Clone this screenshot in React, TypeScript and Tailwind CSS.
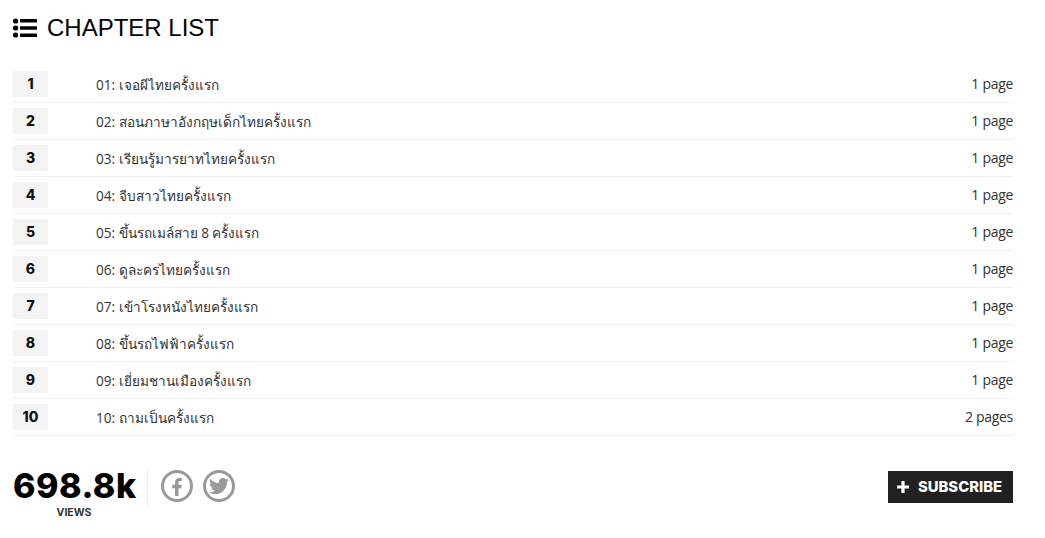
import { FaFacebookF, FaTwitter } from "react-icons/fa";

const chapters = [
  { no: 1, title: "01: เจอผีไทยครั้งแรก", pages: "1 page" },
  { no: 2, title: "02: สอนภาษาอังกฤษเด็กไทยครั้งแรก", pages: "1 page" },
  { no: 3, title: "03: เรียนรู้มารยาทไทยครั้งแรก", pages: "1 page" },
  { no: 4, title: "04: จีบสาวไทยครั้งแรก", pages: "1 page" },
  { no: 5, title: "05: ขึ้นรถเมล์สาย 8 ครั้งแรก", pages: "1 page" },
  { no: 6, title: "06: ดูละครไทยครั้งแรก", pages: "1 page" },
  { no: 7, title: "07: เข้าโรงหนังไทยครั้งแรก", pages: "1 page" },
  { no: 8, title: "08: ขึ้นรถไฟฟ้าครั้งแรก", pages: "1 page" },
  { no: 9, title: "09: เยี่ยมชานเมืองครั้งแรก", pages: "1 page" },
  { no: 10, title: "10: ถามเป็นครั้งแรก", pages: "2 pages" },
];

const App = () => {
  return (
    <div className="w-[1045px] h-[538px] bg-white overflow-hidden pl-[13px] pr-8 pt-[11px] font-['Open_Sans',sans-serif] text-[#333]">
      {/* Header */}
      <div className="flex items-center h-[34px] text-black">
        <svg viewBox="0 0 24 20" className="w-6 h-5 mr-[10px]" fill="currentColor">
          <circle cx="2.6" cy="3" r="2.6" />
          <circle cx="2.6" cy="10" r="2.6" />
          <circle cx="2.6" cy="17" r="2.6" />
          <rect x="7" y="1" width="17" height="3.6" rx="0.6" />
          <rect x="7" y="8.2" width="17" height="3.6" rx="0.6" />
          <rect x="7" y="15.4" width="17" height="3.6" rx="0.6" />
        </svg>
        <h2 className="font-['Liberation_Sans',sans-serif] text-2xl leading-[34px]">CHAPTER LIST</h2>
      </div>

      {/* Chapters */}
      <div className="mt-[26px]">
        {chapters.map((c) => (
          <div key={c.no} className="flex items-start h-[32px] mb-[5px] border-b border-[#f0f0f0]">
            <div className="w-[35px] h-[26px] bg-[#f3f3f3] text-center font-['Inter',sans-serif] text-sm font-extrabold leading-[26px] text-[#111]">
              {c.no}
            </div>
            <div className="ml-[48px] flex-1 text-[13.6px] leading-[28px]">{c.title}</div>
            <div className="text-sm tracking-[-0.3px] leading-[26px]">{c.pages}</div>
          </div>
        ))}
      </div>

      {/* Footer */}
      <div className="flex items-start justify-between mt-[30px]">
        <div className="flex items-start">
          <div className="w-[135px] h-[41px] mt-[1px] border-r border-[#eeeeee]">
            <div className="font-['Inter',sans-serif] text-[34px] font-extrabold leading-[38px] tracking-[0.5px] text-black">
              698.8k
            </div>
            <div className="mt-[1px] pr-[12px] text-center font-['Inter',sans-serif] text-[10.5px] font-bold leading-[14px] text-[#333]">
              VIEWS
            </div>
          </div>
          <div className="flex gap-[10px] ml-[13px] mt-[4px]">
            <div className="w-8 h-8 rounded-full border-[3px] border-[#999] flex items-center justify-center text-[#999]">
              <FaFacebookF className="w-[18px] h-[18px] translate-y-[1px]" />
            </div>
            <div className="w-8 h-8 rounded-full border-[3px] border-[#999] flex items-center justify-center text-[#999]">
              <FaTwitter className="w-5 h-5" />
            </div>
          </div>
        </div>
        <button className="flex items-center w-[125px] h-8 mt-[5px] pl-[9px] bg-[#212121] text-white font-['Inter',sans-serif] text-[14.8px] font-extrabold">
          <svg viewBox="0 0 12 12" className="w-3 h-3 mr-[9px]" fill="currentColor">
            <path d="M4.4 0h3.2v4.4H12v3.2H7.6V12H4.4V7.6H0V4.4h4.4z" />
          </svg>
          SUBSCRIBE
        </button>
      </div>
    </div>
  );
};

export default App;
